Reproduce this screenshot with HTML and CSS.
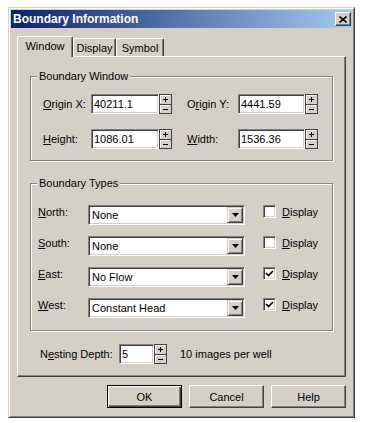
FILE: index.html
```html
<!DOCTYPE html>
<html lang="en">
<head>
  <meta charset="UTF-8">
  <meta name="viewport" content="width=device-width, initial-scale=1.0">
  <link rel="stylesheet" href="styles.css">
</head>
<body>
  <svg class="defs" width="0" height="0">
    <symbol id="spin" viewBox="0 0 13 20">
      <rect x="0.5" y="0.5" width="12" height="19" fill="#d4d0c8" stroke="#404040"/>
      <path d="M1.5 9V1.5H11M1.5 18.5V11.5H11" fill="none" stroke="#fff"/>
      <path d="M1 10.5H12" stroke="#404040"/>
      <path d="M4 5.5H9M6.5 3V8M4 15.5H9" stroke="#000"/>
    </symbol>
    <symbol id="arrow" viewBox="0 0 7 4">
      <path d="M0 0H7L3.5 4Z" fill="#000"/>
    </symbol>
    <symbol id="tick" viewBox="0 0 9 9">
      <path d="M1 4L3.5 6.5L8 2" fill="none" stroke="#000" stroke-width="1.7"/>
    </symbol>
  </svg>

  <div class="dialog">
    <div class="titlebar">
      <span class="title">Boundary Information</span>
      <span class="close-btn">
        <svg width="8" height="7" viewBox="0 0 8 7"><path d="M0.5 0.5L7.5 6.5M7.5 0.5L0.5 6.5" stroke="#000" stroke-width="1.6"/></svg>
      </span>
    </div>

    <div class="dialog-body">
      <div class="tabs">
        <div class="tab tab-window active">Window</div>
        <div class="tab tab-display">Display</div>
        <div class="tab tab-symbol">Symbol</div>
      </div>

      <div class="tab-panel">
        <fieldset class="group group-window">
          <legend>Boundary Window</legend>
          <div class="group-inner">
            <div class="win-row">
              <span class="lbl-a"><u>O</u>rigin X:</span>
              <div class="edit edit-a">40211.1</div>
              <svg class="spin"><use href="#spin"/></svg>
              <span class="lbl-b">O<u>r</u>igin Y:</span>
              <div class="edit edit-b">4441.59</div>
              <svg class="spin"><use href="#spin"/></svg>
            </div>
            <div class="win-row">
              <span class="lbl-a"><u>H</u>eight:</span>
              <div class="edit edit-a">1086.01</div>
              <svg class="spin"><use href="#spin"/></svg>
              <span class="lbl-b"><u>W</u>idth:</span>
              <div class="edit edit-b">1536.36</div>
              <svg class="spin"><use href="#spin"/></svg>
            </div>
          </div>
        </fieldset>

        <fieldset class="group group-types">
          <legend>Boundary Types</legend>
          <div class="group-inner">
            <div class="type-row">
              <span class="type-lbl"><u>N</u>orth:</span>
              <div class="combo"><span class="combo-text">None</span><span class="combo-btn"><svg width="7" height="4"><use href="#arrow"/></svg></span></div>
              <span class="check"></span>
              <span class="check-lbl"><u>D</u>isplay</span>
            </div>
            <div class="type-row">
              <span class="type-lbl"><u>S</u>outh:</span>
              <div class="combo"><span class="combo-text">None</span><span class="combo-btn"><svg width="7" height="4"><use href="#arrow"/></svg></span></div>
              <span class="check"></span>
              <span class="check-lbl"><u>D</u>isplay</span>
            </div>
            <div class="type-row">
              <span class="type-lbl"><u>E</u>ast:</span>
              <div class="combo"><span class="combo-text">No Flow</span><span class="combo-btn"><svg width="7" height="4"><use href="#arrow"/></svg></span></div>
              <span class="check"><svg width="9" height="9"><use href="#tick"/></svg></span>
              <span class="check-lbl"><u>D</u>isplay</span>
            </div>
            <div class="type-row">
              <span class="type-lbl"><u>W</u>est:</span>
              <div class="combo"><span class="combo-text">Constant Head</span><span class="combo-btn"><svg width="7" height="4"><use href="#arrow"/></svg></span></div>
              <span class="check"><svg width="9" height="9"><use href="#tick"/></svg></span>
              <span class="check-lbl"><u>D</u>isplay</span>
            </div>
          </div>
        </fieldset>

        <div class="nest-row">
          <span class="nest-lbl">N<u>e</u>sting Depth:</span>
          <div class="edit edit-nest">5</div>
          <svg class="spin"><use href="#spin"/></svg>
          <span class="nest-info">10 images per well</span>
        </div>
      </div>

      <div class="buttons">
        <div class="btn default">OK</div>
        <div class="btn">Cancel</div>
        <div class="btn">Help</div>
      </div>
    </div>
  </div>
</body>
</html>
```

FILE: styles.css
```css
body {
  margin: 0;
  background-color: #ffffff;
  font-family: 'Liberation Sans', Arial, sans-serif;
  font-size: 11px;
  color: #000;
}

.defs {
  position: absolute;
}

.dialog {
  margin: 7px 0 0 8px;
  width: 347px;
  height: 411px;
  box-sizing: border-box;
  padding: 2px;
  background-color: #d4d0c8;
  border: 1px solid;
  border-color: #d4d0c8 #404040 #404040 #d4d0c8;
  box-shadow: inset 1px 1px #fff, inset -1px -1px #808080;
}

.titlebar {
  height: 18px;
  display: flex;
  align-items: center;
  justify-content: space-between;
  padding: 0 1px 0 2px;
  background: linear-gradient(to right, #0a246a, #a6caf0);
  color: #fff;
  font-size: 12px;
  font-weight: bold;
}

.close-btn {
  width: 16px;
  height: 14px;
  box-sizing: border-box;
  display: flex;
  align-items: center;
  justify-content: center;
  background-color: #d4d0c8;
  border: 1px solid;
  border-color: #fff #404040 #404040 #fff;
  box-shadow: inset -1px -1px #808080;
}

.dialog-body {
  padding: 8px 6px 0 6px;
}

/* tabs */

.tabs {
  display: flex;
  align-items: flex-end;
  height: 20px;
}

.tab {
  height: 18px;
  box-sizing: border-box;
  display: flex;
  align-items: center;
  justify-content: center;
  border: 1px solid;
  border-bottom: none;
  border-color: #fff #404040 transparent #fff;
  border-radius: 2px 2px 0 0;
  box-shadow: inset -1px 0 #808080;
}

.tab.active {
  height: 21px;
  margin-bottom: -1px;
  padding-bottom: 2px;
  position: relative;
  z-index: 1;
  background-color: #d4d0c8;
}

.tab-window { width: 56px; }
.tab-display { width: 43px; }
.tab-symbol { width: 48px; }

.tab-panel {
  height: 321px;
  box-sizing: border-box;
  padding: 13px 0 0 12px;
  border: 1px solid;
  border-color: #fff #404040 #404040 #fff;
  box-shadow: inset -1px -1px #808080;
}

/* group boxes */

.group {
  width: 303px;
  box-sizing: border-box;
  margin: 0;
  padding: 0;
  min-inline-size: 0;
  border: 1px solid #808080;
  box-shadow: inset 1px 1px #fff, 1px 1px #fff;
}

.group legend {
  margin-left: 6px;
  padding: 0 2px;
  line-height: 13px;
  background-color: #d4d0c8;
}

.group-window .group-inner {
  padding: 11px 0 11px 12px;
  display: flex;
  flex-direction: column;
  gap: 15px;
}

.group-types {
  margin-top: 16px;
}

.group-types .group-inner {
  padding: 15px 0 12px 7px;
  display: flex;
  flex-direction: column;
  gap: 11px;
}

/* fields */

.edit {
  height: 20px;
  box-sizing: border-box;
  display: flex;
  align-items: center;
  padding: 0 2px;
  background-color: #fff;
  border: 1px solid;
  border-color: #808080 #fff #fff #808080;
  box-shadow: inset 1px 1px #404040, inset -1px -1px #d4d0c8;
}

.spin {
  width: 13px;
  height: 20px;
  flex: none;
}

.win-row {
  display: flex;
  align-items: center;
  height: 20px;
}

.lbl-a { width: 48px; }
.edit-a { width: 68px; }
.lbl-b { width: 51px; margin-left: 15px; }
.edit-b { width: 67px; }

.type-row {
  display: flex;
  align-items: flex-start;
  height: 20px;
  line-height: 14px;
}

.type-lbl { width: 50px; }

.combo {
  width: 157px;
  height: 20px;
  box-sizing: border-box;
  display: flex;
  align-items: center;
  padding: 1px;
  background-color: #fff;
  border: 1px solid;
  border-color: #808080 #fff #fff #808080;
  box-shadow: inset 1px 1px #404040, inset -1px -1px #d4d0c8;
}

.combo-text {
  flex: 1;
  padding-left: 2px;
}

.combo-btn {
  width: 16px;
  height: 16px;
  box-sizing: border-box;
  display: flex;
  align-items: center;
  justify-content: center;
  background-color: #d4d0c8;
  border: 1px solid;
  border-color: #d4d0c8 #404040 #404040 #d4d0c8;
  box-shadow: inset 1px 1px #fff, inset -1px -1px #808080;
}

.check {
  width: 13px;
  height: 13px;
  box-sizing: border-box;
  margin-left: 18px;
  display: flex;
  align-items: center;
  justify-content: center;
  background-color: #fff;
  border: 1px solid;
  border-color: #808080 #fff #fff #808080;
  box-shadow: inset 1px 1px #404040, inset -1px -1px #d4d0c8;
}

.check-lbl {
  margin-left: 6px;
}

.nest-row {
  display: flex;
  align-items: center;
  height: 20px;
  margin-top: 13px;
  padding-left: 10px;
}

.nest-lbl { width: 79px; }
.edit-nest { width: 35px; }
.nest-info { margin-left: 13px; }

/* buttons */

.buttons {
  display: flex;
  justify-content: flex-end;
  gap: 7px;
  margin-top: 8px;
}

.btn {
  width: 75px;
  height: 23px;
  box-sizing: border-box;
  display: flex;
  align-items: center;
  justify-content: center;
  border: 1px solid;
  border-color: #fff #404040 #404040 #fff;
  box-shadow: inset -1px -1px #808080;
}

.btn.default {
  border-color: #000;
  box-shadow: inset 1px 1px #fff, inset -1px -1px #404040, inset -2px -2px #808080;
}
```
